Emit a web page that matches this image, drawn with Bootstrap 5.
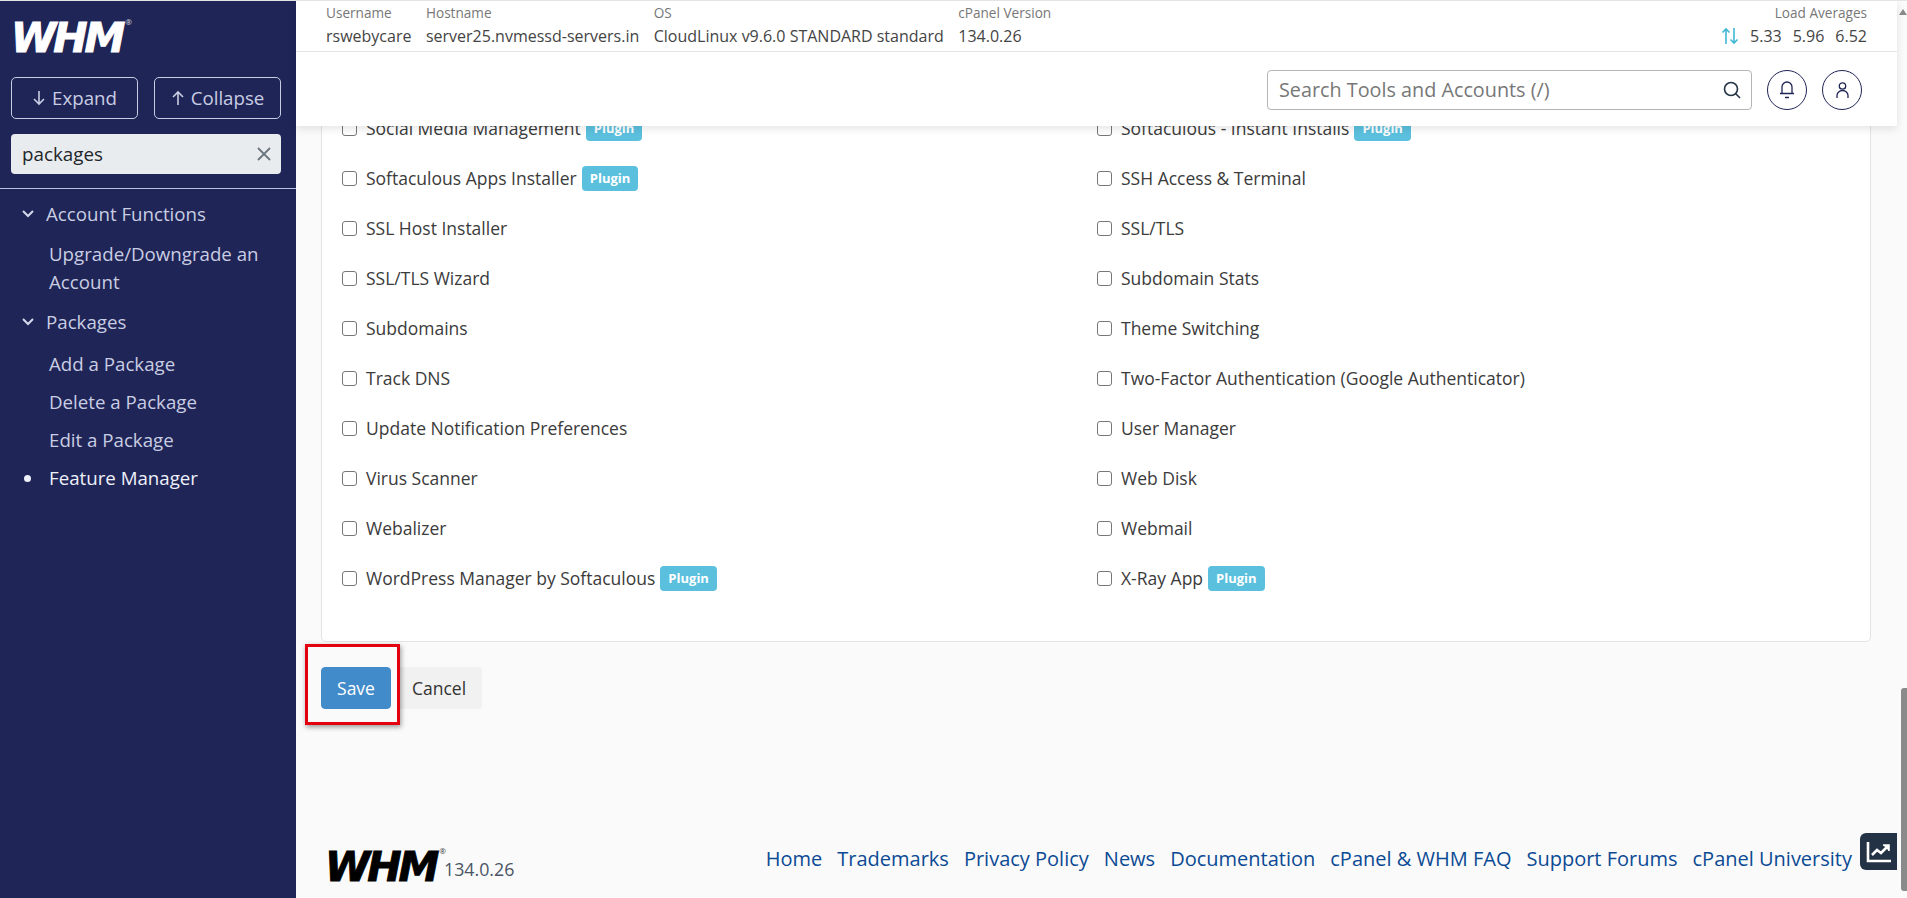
<!DOCTYPE html>
<html lang="en">
<head>
    <meta charset="UTF-8">
    <meta name="viewport" content="width=device-width, initial-scale=1.0">
    <title>WHM - Feature Manager</title>
    <link href="https://cdn.jsdelivr.net/npm/bootstrap@5.3.0/dist/css/bootstrap.min.css" rel="stylesheet">
    <style>
        html, body { height: 100%; overflow: hidden; }
        body {
            font-family: "Open Sans", "Noto Sans", sans-serif;
            font-size: 17.5px;
            color: #3b3b3b;
            background: #fafafa;
            border-top: 1px solid #e4e4e4;
        }
        .shell { height: 897px; }

        /* sidebar */
        .side-nav { width: 296px; flex: none; background: #1f2556; color: #c9cde3; }
        .side-top { padding: 17px 15px 14px 11px; border-bottom: 1px solid #b9bfdd; }
        .whm-logo {
            font-family: "DejaVu Sans", sans-serif;
            font-weight: 700;
            font-style: italic;
            line-height: 1;
            letter-spacing: -3px;
            display: inline-block;
            white-space: nowrap;
        }
        .whm-logo sup {
            font-family: "Open Sans", sans-serif;
            font-size: 8px;
            letter-spacing: 0;
            font-weight: 400;
            font-style: normal;
            top: -3.4em;
            left: 3px;
            -webkit-text-stroke: 0;
            opacity: .8;
        }
        .side-logo { color: #fff; font-size: 41px; -webkit-text-stroke: 1px #fff; height: 42px; margin-bottom: 17px; display: block; }
        .tree-btn {
            height: 42px;
            flex: 1 1 0;
            color: #c9cde3;
            border: 1px solid #c9cde3;
            border-radius: 5px;
            font-size: 18.7px;
            padding: 0;
            gap: 6px;
        }
        .tree-btn:hover { color: #fff; border-color: #fff; }
        .side-filter {
            height: 40px;
            margin-top: 15px;
            background: #e9ecef;
            border-radius: 4px;
            padding: 0 10px 0 11px;
            color: #212529;
            font-size: 18.8px;
        }
        .side-menu { padding: 6px 0 0; margin: 0; list-style: none; font-size: 18.7px; }
        .menu-head { height: 38px; padding-left: 22px; gap: 12px; margin-bottom: 2px; }
        .menu-item + .menu-head { margin-top: 2px; }
        .menu-item { padding: 5px 30px 5px 49px; line-height: 28px; min-height: 38px; }
        .menu-item.is-current { color: #eef0fa; }
        .cur-dot { width: 7px; height: 7px; border-radius: 50%; background: #eef0fa; margin: 11px 0 0 -25px; float: left; }

        /* header */
        .top-head { background: #fff; box-shadow: 0 3px 8px rgba(0,0,0,.1); z-index: 5; position: relative; }
        .info-band { height: 51px; border-bottom: 1px solid #e4e4e4; padding: 2px 30px 0; font-size: 16px; color: #444; }
        .info-band .cap { font-size: 13.6px; color: #777; line-height: 20px; }
        .info-band .val { line-height: 26px; white-space: nowrap; gap: 11px; }
        .info-cell { margin-right: 14.5px; }
        .search-band { height: 74px; padding: 18px 35px 0 0; }
        .tool-search {
            width: 485px;
            height: 40px;
            border: 1px solid #b5b5b5;
            border-radius: 4px;
            padding: 0 10px 0 11px;
            font-size: 19.8px;
            color: #777;
        }
        .round-btn { width: 40px; height: 40px; border: 1px solid #1f2556; border-radius: 50%; flex: none; margin-left: 15px; }

        /* content */
        .body-clip { overflow: hidden; flex: 1 1 auto; padding: 0 26px 0 25px; }
        .feature-card {
            margin-top: -44px;
            height: 560px;
            background: #fff;
            border: 1px solid #e4e4e4;
            border-radius: 5px;
            padding: 20px;
        }
        .feat-row { height: 50px; white-space: nowrap; }
        .feat-cell:nth-child(even) { padding-left: 1px; }
        .feat-row .form-check-input { width: 15px; height: 15px; margin: 0 9px 0 0; flex: none; border-color: #777; border-radius: 3px; }
        .plugin-tag {
            background: #5bc0de;
            color: #fff;
            font-size: 13px;
            font-weight: 700;
            padding: 0 8px;
            height: 25px;
            line-height: 25px;
            border-radius: 4px;
            margin-left: 5px;
        }
        .form-acts { margin-top: 25px; }
        .save-btn { width: 70px; height: 42px; background: #428bca; color: #fff; border: 1px solid #428bca; border-radius: 4px; padding: 0; font-size: 17.5px; }
        .save-btn:hover { background: #3a7db8; color: #fff; }
        .cancel-btn { width: 84px; height: 42px; margin-left: 7px; background: #f1f1f1; color: #333; border: 0; border-radius: 4px; padding: 0 2px 0 0; font-size: 17.5px; }
        .mark-box {
            position: absolute;
            left: -16px;
            top: -23px;
            width: 95px;
            height: 81px;
            border: 3px solid #e3000f;
            box-shadow: 1px 2px 5px rgba(0,0,0,.4);
            pointer-events: none;
        }
        .page-foot { flex: none; height: 68px; padding: 0 0 0 29px; }
        .foot-logo { color: #000; font-size: 41px; -webkit-text-stroke: 1px #000; margin-top: 17px; }
        .foot-ver { font-size: 17.8px; color: #4b5563; margin: 27px 0 0 1px; line-height: 24px; }
        .foot-links { gap: 15px; font-size: 20px; margin-top: 14px; white-space: nowrap; }
        .foot-links a { color: #0b4a94; text-decoration: none; }
        .stats-tab { width: 37px; height: 37px; background: #233345; border-radius: 6px 0 0 6px; margin: 3px 0 0 8px; }

        /* fake scrollbar */
        .scroll-rail { width: 10px; flex: none; background: #fafafa; }
        .rail-arrow { width: 0; height: 0; border: solid transparent; border-width: 0 4px 6px; border-bottom-color: #8a8a8a; margin-top: 8px; }
        .scroll-thumb { width: 6px; height: 203px; background: #8a8a8a; border-radius: 3px 0 0 3px; margin-bottom: 7px; }
    </style>
</head>
<body>
<div class="shell d-flex">
    <aside class="side-nav">
        <div class="side-top">
            <div class="side-logo whm-logo">WHM<sup>®</sup></div>
            <div class="d-flex gap-3">
                <button type="button" class="btn tree-btn d-flex align-items-center justify-content-center">
                    <svg width="14" height="16" viewBox="0 0 14 16" fill="none" stroke="currentColor" stroke-width="1.6"><path d="M7 1v13M2 9l5 5 5-5"/></svg>Expand
                </button>
                <button type="button" class="btn tree-btn d-flex align-items-center justify-content-center">
                    <svg width="14" height="16" viewBox="0 0 14 16" fill="none" stroke="currentColor" stroke-width="1.6"><path d="M7 15V2M2 7l5-5 5 5"/></svg>Collapse
                </button>
            </div>
            <div class="side-filter d-flex align-items-center justify-content-between">
                <span>packages</span>
                <svg width="14" height="14" viewBox="0 0 14 14" stroke="#6c757d" stroke-width="1.8"><path d="M1 1l12 12M13 1L1 13"/></svg>
            </div>
        </div>
        <ul class="side-menu">
            <li class="menu-head d-flex align-items-center">
                <svg width="12" height="8" viewBox="0 0 12 8" fill="none" stroke="#d5d9ec" stroke-width="2"><path d="M1 1l5 5 5-5"/></svg>Account Functions
            </li>
            <li class="menu-item">Upgrade/Downgrade an Account</li>
            <li class="menu-head d-flex align-items-center mb-1">
                <svg width="12" height="8" viewBox="0 0 12 8" fill="none" stroke="#d5d9ec" stroke-width="2"><path d="M1 1l5 5 5-5"/></svg>Packages
            </li>
            <li class="menu-item">Add a Package</li>
            <li class="menu-item">Delete a Package</li>
            <li class="menu-item">Edit a Package</li>
            <li class="menu-item is-current"><span class="cur-dot"></span>Feature Manager</li>
        </ul>
    </aside>

    <main class="flex-grow-1 d-flex flex-column" style="min-width:0">
        <header class="top-head">
            <div class="info-band d-flex">
                <div class="info-cell"><div class="cap">Username</div><div class="val">rswebycare</div></div>
                <div class="info-cell"><div class="cap">Hostname</div><div class="val">server25.nvmessd-servers.in</div></div>
                <div class="info-cell"><div class="cap">OS</div><div class="val">CloudLinux v9.6.0 STANDARD standard</div></div>
                <div class="info-cell"><div class="cap">cPanel Version</div><div class="val">134.0.26</div></div>
                <div class="ms-auto text-end">
                    <div class="cap">Load Averages</div>
                    <div class="val d-flex align-items-center justify-content-end">
                        <svg width="18" height="18" viewBox="0 0 18 18" fill="none" stroke="#3fb8d6" stroke-width="1.6"><path d="M5 17V2M1.5 5.5L5 2l3.5 3.5M13 1v15M9.500 12.500L13 16l3.500-3.500"/></svg>
                        <span>5.33</span><span>5.96</span><span>6.52</span>
                    </div>
                </div>
            </div>
            <div class="search-band d-flex justify-content-end">
                <div class="tool-search d-flex align-items-center justify-content-between">
                    <span>Search Tools and Accounts (/)</span>
                    <svg width="18" height="18" viewBox="0 0 18 18" fill="none" stroke="#233345" stroke-width="1.6"><circle cx="8" cy="8" r="6.500"/><path d="M12.500 12.500L17 17"/></svg>
                </div>
                <div class="round-btn d-flex align-items-center justify-content-center">
                    <svg width="16" height="18" viewBox="0 0 16 18" fill="none" stroke="#1f2556" stroke-width="1.300"><path d="M3 12V6a5 5 0 0 1 10 0v6M1 12.500h14M6 16.500h4"/></svg>
                </div>
                <div class="round-btn d-flex align-items-center justify-content-center">
                    <svg width="13" height="17" viewBox="0 0 13 17" fill="none" stroke="#1f2556" stroke-width="1.300"><circle cx="6.500" cy="4" r="3.200"/><path d="M1 16v-2.500a5.500 5 0 0 1 11 0V16"/></svg>
                </div>
            </div>
        </header>

        <div class="body-clip">
            <form class="feature-card">
                <div class="row g-0">
                    <div class="col-6 feat-cell"><label class="feat-row d-flex align-items-center"><input class="form-check-input" type="checkbox">Social Media Management<span class="plugin-tag">Plugin</span></label></div>
                    <div class="col-6 feat-cell"><label class="feat-row d-flex align-items-center"><input class="form-check-input" type="checkbox">Softaculous - Instant Installs<span class="plugin-tag">Plugin</span></label></div>
                    <div class="col-6 feat-cell"><label class="feat-row d-flex align-items-center"><input class="form-check-input" type="checkbox">Softaculous Apps Installer<span class="plugin-tag">Plugin</span></label></div>
                    <div class="col-6 feat-cell"><label class="feat-row d-flex align-items-center"><input class="form-check-input" type="checkbox">SSH Access &amp; Terminal</label></div>
                    <div class="col-6 feat-cell"><label class="feat-row d-flex align-items-center"><input class="form-check-input" type="checkbox">SSL Host Installer</label></div>
                    <div class="col-6 feat-cell"><label class="feat-row d-flex align-items-center"><input class="form-check-input" type="checkbox">SSL/TLS</label></div>
                    <div class="col-6 feat-cell"><label class="feat-row d-flex align-items-center"><input class="form-check-input" type="checkbox">SSL/TLS Wizard</label></div>
                    <div class="col-6 feat-cell"><label class="feat-row d-flex align-items-center"><input class="form-check-input" type="checkbox">Subdomain Stats</label></div>
                    <div class="col-6 feat-cell"><label class="feat-row d-flex align-items-center"><input class="form-check-input" type="checkbox">Subdomains</label></div>
                    <div class="col-6 feat-cell"><label class="feat-row d-flex align-items-center"><input class="form-check-input" type="checkbox">Theme Switching</label></div>
                    <div class="col-6 feat-cell"><label class="feat-row d-flex align-items-center"><input class="form-check-input" type="checkbox">Track DNS</label></div>
                    <div class="col-6 feat-cell"><label class="feat-row d-flex align-items-center"><input class="form-check-input" type="checkbox">Two-Factor Authentication (Google Authenticator)</label></div>
                    <div class="col-6 feat-cell"><label class="feat-row d-flex align-items-center"><input class="form-check-input" type="checkbox">Update Notification Preferences</label></div>
                    <div class="col-6 feat-cell"><label class="feat-row d-flex align-items-center"><input class="form-check-input" type="checkbox">User Manager</label></div>
                    <div class="col-6 feat-cell"><label class="feat-row d-flex align-items-center"><input class="form-check-input" type="checkbox">Virus Scanner</label></div>
                    <div class="col-6 feat-cell"><label class="feat-row d-flex align-items-center"><input class="form-check-input" type="checkbox">Web Disk</label></div>
                    <div class="col-6 feat-cell"><label class="feat-row d-flex align-items-center"><input class="form-check-input" type="checkbox">Webalizer</label></div>
                    <div class="col-6 feat-cell"><label class="feat-row d-flex align-items-center"><input class="form-check-input" type="checkbox">Webmail</label></div>
                    <div class="col-6 feat-cell"><label class="feat-row d-flex align-items-center"><input class="form-check-input" type="checkbox">WordPress Manager by Softaculous<span class="plugin-tag">Plugin</span></label></div>
                    <div class="col-6 feat-cell"><label class="feat-row d-flex align-items-center"><input class="form-check-input" type="checkbox">X-Ray App<span class="plugin-tag">Plugin</span></label></div>
                </div>
            </form>
            <div class="form-acts position-relative d-inline-block">
                <button type="button" class="btn save-btn">Save</button><button type="button" class="btn cancel-btn">Cancel</button>
                <span class="mark-box"></span>
            </div>
        </div>

        <footer class="page-foot d-flex align-items-start">
            <div class="foot-logo whm-logo">WHM<sup>®</sup></div>
            <div class="foot-ver">134.0.26</div>
            <nav class="foot-links d-flex ms-auto">
                <a href="#">Home</a><a href="#">Trademarks</a><a href="#">Privacy Policy</a><a href="#">News</a><a href="#">Documentation</a><a href="#">cPanel &amp; WHM FAQ</a><a href="#">Support Forums</a><a href="#">cPanel University</a>
            </nav>
            <div class="stats-tab d-flex align-items-center justify-content-center">
                <svg width="26" height="24" viewBox="0 0 26 24" fill="none" stroke="#fff" stroke-width="2.600"><path d="M2 2v19h23"/><path d="M6 15l5-5 4 3 7-7"/><path d="M17 5h6v6" stroke-width="1.600" fill="#fff"/></svg>
            </div>
        </footer>
    </main>

    <div class="scroll-rail d-flex flex-column justify-content-between align-items-end">
        <div class="rail-arrow"></div>
        <div class="scroll-thumb"></div>
    </div>
</div>
<script src="https://cdn.jsdelivr.net/npm/bootstrap@5.3.0/dist/js/bootstrap.bundle.min.js"></script>
</body>
</html>
